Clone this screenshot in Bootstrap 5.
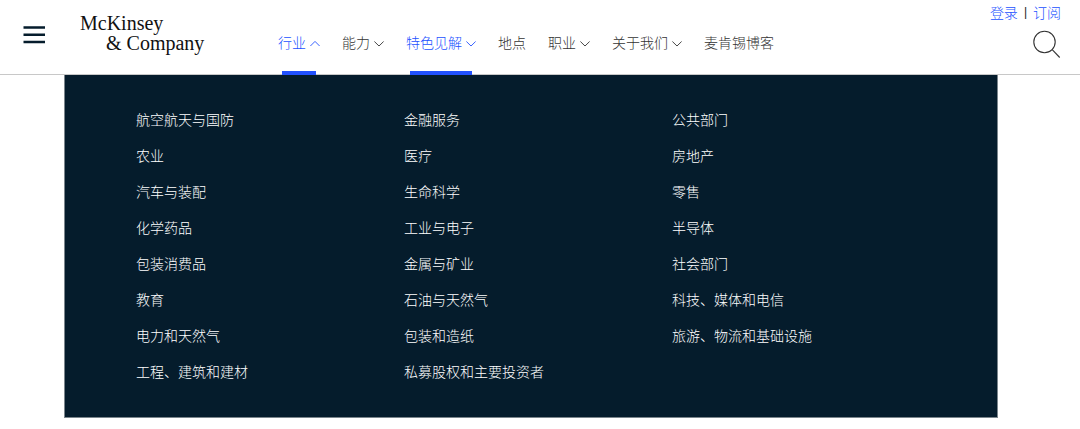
<!DOCTYPE html>
<html lang="zh-CN">
<head>
<meta charset="utf-8">
<meta name="viewport" content="width=device-width, initial-scale=1">
<title>McKinsey &amp; Company</title>
<link href="https://cdn.jsdelivr.net/npm/bootstrap@5.3.0/dist/css/bootstrap.min.css" rel="stylesheet">
<style>
  :root { --navy: #051c2c; --electric: #2251ff; }
  body { font-family: "Noto Sans CJK SC", sans-serif; font-size: 14px; line-height: 20px; font-weight: 300; color: #333; background: #fff; }
  a { text-decoration: none; }
  .site-header { height: 75px; border-bottom: 1px solid #c8c8c8; padding: 0 19px 0 23px; }
  .menu-toggle { width: 23px; height: 20px; margin-top: 25px; color: var(--navy); }
  .brand { margin: 13px 0 0 34px; width: 128px; font-family: "Liberation Serif", serif; font-size: 20px; line-height: 20px; font-weight: 400; color: #111; }
  .brand-second { padding-left: 26px; }
  .main-nav { gap: 22px; margin-left: 70px; padding-top: 32px; }
  .main-nav .nav-entry { position: relative; color: #333; gap: 4px; white-space: nowrap; }
  .main-nav .active { color: var(--electric); }
  .main-nav .active::after { content: ""; position: absolute; left: 4px; right: 4px; bottom: -1px; height: 4px; background: var(--electric); }
  .nav-label { height: 20px; }
  .chevron { stroke-width: .9; }
  .tools { padding-top: 2px; }
  .tools a { color: var(--electric); }
  .divider { font-family: "Liberation Sans", sans-serif; font-size: 12px; font-weight: 400; color: #222; }
  .account { gap: 6px; }
  .mega { margin: 0 82px 0 64px; padding: 26px 57px 28px 71px; background: var(--navy); border: 1px solid #7b858c; border-top: 0; }
  .mega a { color: #fff; line-height: 36px; display: block; }
</style>
</head>
<body>
<header class="site-header d-flex align-items-stretch">
  <button type="button" class="menu-toggle btn p-0 border-0 rounded-0 d-flex" aria-label="菜单">
    <svg width="23" height="20" viewBox="0 0 23 20"><path d="M.5 2.5h21.500M.5 9.700h21.500M.5 17h21.500" stroke="currentColor" stroke-width="2.600"/></svg>
  </button>
  <a class="brand flex-shrink-0" href="#"><div>McKinsey</div><div class="brand-second text-nowrap">&amp; Company</div></a>
  <nav class="main-nav d-flex" aria-label="主导航">
    <a class="nav-entry active d-flex" href="#"><span class="nav-label">行业</span><svg class="chevron" width="10" height="20" viewBox="0 0 10 20" fill="none" stroke="currentColor"><path d="M.4 14L5 9.400 9.600 14"/></svg></a>
    <a class="nav-entry d-flex" href="#"><span class="nav-label">能力</span><svg class="chevron" width="10" height="20" viewBox="0 0 10 20" fill="none" stroke="currentColor"><path d="M.4 9.500L5 14l4.600-4.500"/></svg></a>
    <a class="nav-entry active d-flex" href="#"><span class="nav-label">特色见解</span><svg class="chevron" width="10" height="20" viewBox="0 0 10 20" fill="none" stroke="currentColor"><path d="M.4 9.500L5 14l4.600-4.500"/></svg></a>
    <a class="nav-entry d-flex" href="#"><span class="nav-label">地点</span></a>
    <a class="nav-entry d-flex" href="#"><span class="nav-label">职业</span><svg class="chevron" width="10" height="20" viewBox="0 0 10 20" fill="none" stroke="currentColor"><path d="M.4 9.500L5 14l4.600-4.500"/></svg></a>
    <a class="nav-entry d-flex" href="#"><span class="nav-label">关于我们</span><svg class="chevron" width="10" height="20" viewBox="0 0 10 20" fill="none" stroke="currentColor"><path d="M.4 9.500L5 14l4.600-4.500"/></svg></a>
    <a class="nav-entry d-flex" href="#"><span class="nav-label">麦肯锡博客</span></a>
  </nav>
  <div class="tools ms-auto d-flex flex-column align-items-end">
    <div class="account d-flex"><a href="#">登录</a><span class="divider">|</span><a href="#">订阅</a></div>
    <button type="button" class="btn p-0 border-0 rounded-0 d-flex mt-2" aria-label="搜索">
      <svg width="28" height="29" viewBox="0 0 28 29" fill="none" stroke="#333" stroke-width="1.100"><circle cx="11.500" cy="12" r="10.700"/><path d="M19.200 19.700l7.500 7.800"/></svg>
    </button>
  </div>
</header>
<main>
  <section class="mega" aria-label="行业">
    <div class="row g-0">
      <ul class="col-4 list-unstyled mb-0">
        <li><a href="#">航空航天与国防</a></li>
        <li><a href="#">农业</a></li>
        <li><a href="#">汽车与装配</a></li>
        <li><a href="#">化学药品</a></li>
        <li><a href="#">包装消费品</a></li>
        <li><a href="#">教育</a></li>
        <li><a href="#">电力和天然气</a></li>
        <li><a href="#">工程、建筑和建材</a></li>
      </ul>
      <ul class="col-4 list-unstyled mb-0">
        <li><a href="#">金融服务</a></li>
        <li><a href="#">医疗</a></li>
        <li><a href="#">生命科学</a></li>
        <li><a href="#">工业与电子</a></li>
        <li><a href="#">金属与矿业</a></li>
        <li><a href="#">石油与天然气</a></li>
        <li><a href="#">包装和造纸</a></li>
        <li><a href="#">私募股权和主要投资者</a></li>
      </ul>
      <ul class="col-4 list-unstyled mb-0">
        <li><a href="#">公共部门</a></li>
        <li><a href="#">房地产</a></li>
        <li><a href="#">零售</a></li>
        <li><a href="#">半导体</a></li>
        <li><a href="#">社会部门</a></li>
        <li><a href="#">科技、媒体和电信</a></li>
        <li><a href="#">旅游、物流和基础设施</a></li>
      </ul>
    </div>
  </section>
</main>
<script src="https://cdn.jsdelivr.net/npm/bootstrap@5.3.0/dist/js/bootstrap.bundle.min.js"></script>
</body>
</html>
